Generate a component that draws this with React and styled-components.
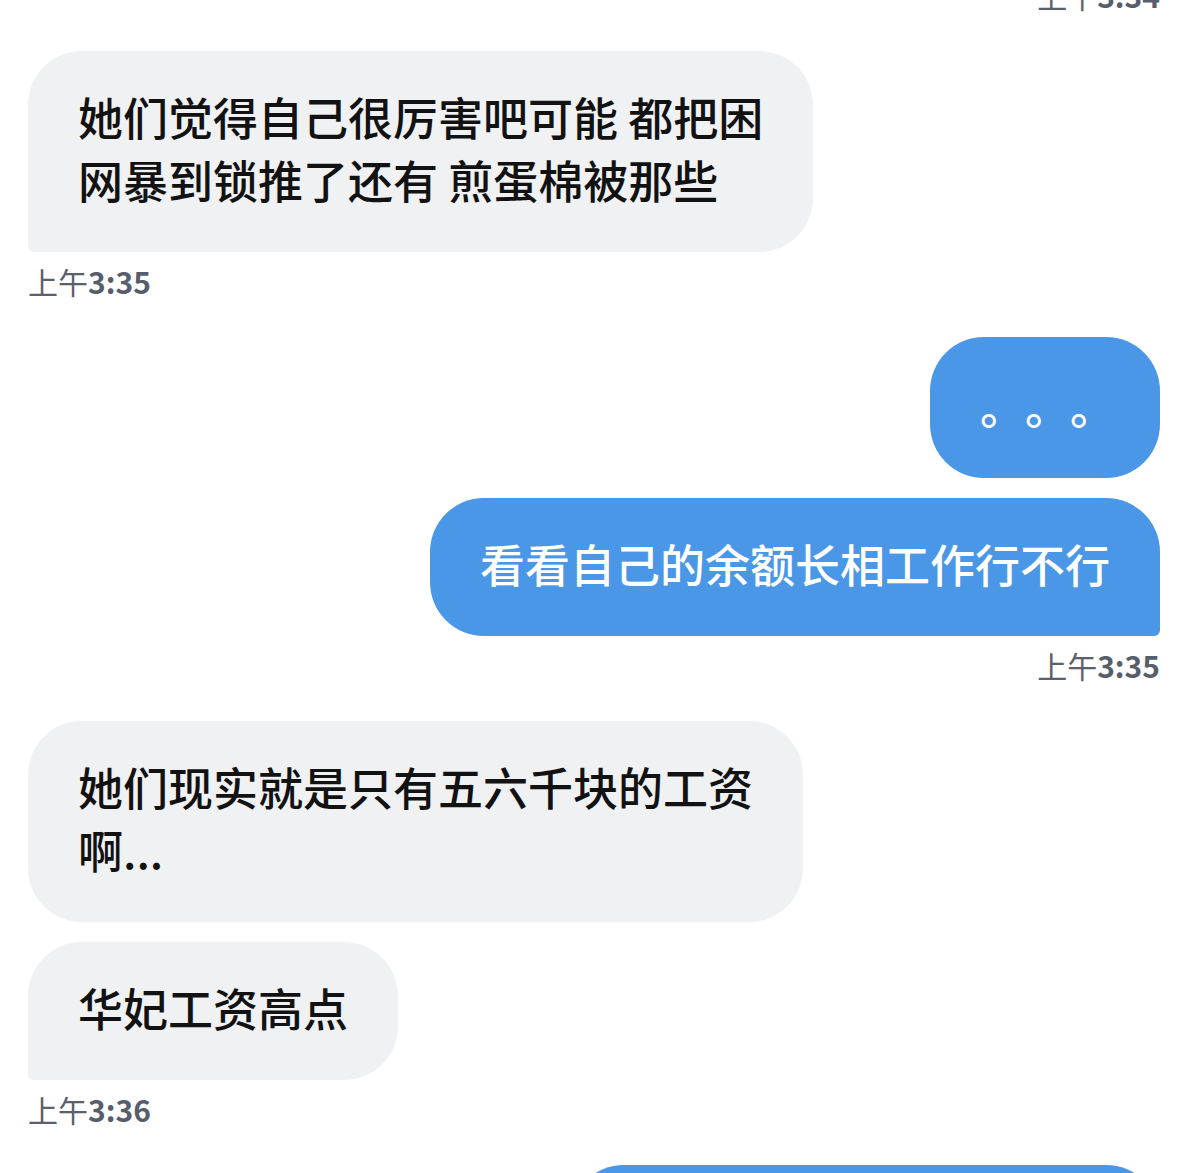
import React from "react";
import styled, { createGlobalStyle } from "styled-components";

const GlobalStyle = createGlobalStyle`
  body {
    margin: 0;
    background: #ffffff;
    font-family: "Noto Sans CJK SC", "Noto Sans", sans-serif;
    overflow: hidden;
  }
`;

const Thread = styled.div`
  display: flex;
  flex-direction: column;
  gap: 36px;
  margin-top: -25px;
  padding: 0 29px 0 28px;
`;

const Group = styled.div`
  display: flex;
  flex-direction: column;
  align-items: ${(p) => (p.$mine ? "flex-end" : "flex-start")};
  gap: 20px;
`;

const Bubble = styled.div`
  box-sizing: border-box;
  width: ${(p) => p.$width || "fit-content"};
  min-height: 138px;
  padding: 33.5px 50px 41.5px;
  font-size: 45px;
  line-height: 63px;
  font-weight: 500;
  white-space: nowrap;
  color: ${(p) => (p.$mine ? "#ffffff" : "#121212")};
  background: ${(p) => (p.$mine ? "#4a97e7" : "#f0f1f3")};
  border-radius: 54px;
  ${(p) => p.$last && (p.$mine ? "border-bottom-right-radius: 6px;" : "border-bottom-left-radius: 6px;")}
`;

// full-width stops: each one takes a whole em cell
const Stop = styled.span`
  display: inline-block;
  width: 45px;
  vertical-align: -3px;

  &:last-child {
    width: 40px;
  }
`;

const Stamp = styled.div`
  font-size: 30px;
  line-height: 40px;
  color: #5b606a;

  ${Group} > ${Bubble} + & {
    margin-top: -11px;
  }

  b {
    font-weight: 700;
    color: #575e6b;
  }
`;

const Time = ({ t }) => (
  <Stamp>
    上午<b>{t}</b>
  </Stamp>
);

const App = () => {
  return (
    <>
      <GlobalStyle />
      <Thread>
        <Group $mine>
          <Time t="3:34" />
        </Group>

        <Group>
          <Bubble $last>
            她们觉得自己很厉害吧可能 都把困
            <br />
            网暴到锁推了还有 煎蛋棉被那些
          </Bubble>
          <Time t="3:35" />
        </Group>

        <Group $mine>
          <Bubble $mine>
            <Stop>。</Stop>
            <Stop>。</Stop>
            <Stop>。</Stop>
          </Bubble>
          <Bubble $mine $last>看看自己的余额长相工作行不行</Bubble>
          <Time t="3:35" />
        </Group>

        <Group>
          <Bubble>
            她们现实就是只有五六千块的工资
            <br />
            啊...
          </Bubble>
          <Bubble $last>华妃工资高点</Bubble>
          <Time t="3:36" />
        </Group>

        <Group $mine>
          <Bubble $mine $width="590px" />
        </Group>
      </Thread>
    </>
  );
};

export default App;
